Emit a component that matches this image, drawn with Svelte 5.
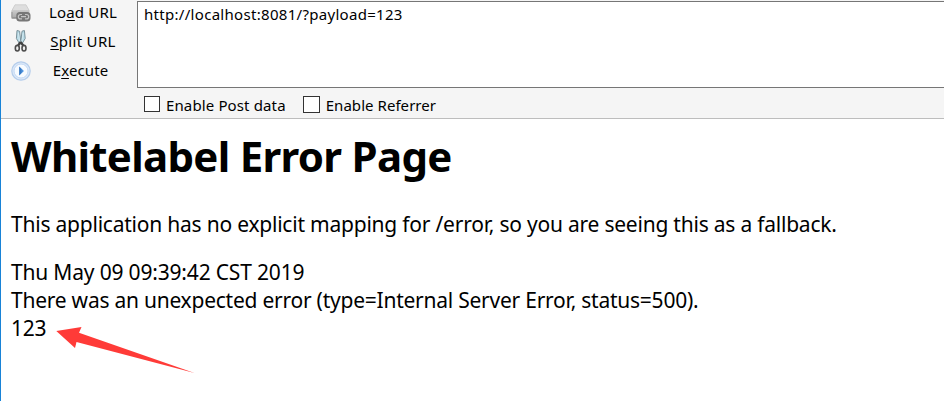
<script>
  const url = 'http://localhost:8081/?payload=123';
</script>

<div class="window">
  <header class="toolbar">
    <nav class="actions">
      <div class="action">
        <svg width="20" height="20" viewBox="0 0 20 20">
          <defs>
            <linearGradient id="drive" x1="0" y1="0" x2="0" y2="1">
              <stop offset="0" stop-color="#e3e3e3" />
              <stop offset="1" stop-color="#a5a5a5" />
            </linearGradient>
          </defs>
          <path d="M4 1.5H15L18.5 8V14.5Q18.5 16 17 16H1.5Q.3 16 .3 14.5V8Z" fill="url(#drive)" />
          <path d="M4 1.8H15L18.2 7.5H1Z" fill="#dedede" stroke="#c4c4c4" stroke-width=".6" />
          <path d="M1 9V14.5H17" fill="none" stroke="#959595" />
          <rect x="5.3" y="9" width="14.2" height="9.5" rx="3.5" fill="#777" />
          <path d="M11 11.5H9.5a2.2 2.2 0 0 0 0 4.4H11M14 11.5H15.5a2.2 2.2 0 0 1 0 4.4H14M10 13.7H15" fill="none" stroke="#c4c4c4" stroke-width="1.2" />
        </svg>
        <span class="load">Lo<u>a</u>d URL</span>
      </div>
      <div class="action scissors">
        <svg width="20" height="24" viewBox="0 0 20 24">
          <path d="M6 1.5L5.4 9.5L9 15.5L9.8 13L8.6 2.2ZM13.4 1.5L14.2 9.5L10.6 15.5L9.8 13L11 2.2Z" fill="#b8dbe7" stroke="#7b929b" />
          <path d="M7.4 4L8.7 13M12.2 4L10.8 13" stroke="#d3e9f0" />
          <path d="M9.6 13L6.8 17M9.6 13L12.6 17" stroke="#424242" stroke-width="2.2" />
          <ellipse cx="6.3" cy="19.2" rx="2" ry="2.8" fill="#eee" stroke="#4c4c4c" stroke-width="1.6" />
          <ellipse cx="13" cy="19.2" rx="2" ry="2.8" fill="#eee" stroke="#4c4c4c" stroke-width="1.6" />
        </svg>
        <span class="split"><u>S</u>plit URL</span>
      </div>
      <div class="action">
        <svg width="20" height="20" viewBox="0 0 20 20">
          <defs>
            <linearGradient id="play" x1="0" y1="0" x2="1" y2="0">
              <stop offset="0" stop-color="#2469b8" />
              <stop offset="1" stop-color="#67aaf0" />
            </linearGradient>
          </defs>
          <circle cx="10" cy="10" r="9.2" fill="#dce9f9" stroke="#b5cdeb" stroke-width="1.2" />
          <circle cx="10" cy="10" r="7" fill="#f7fbff" stroke="#c3d8f4" />
          <path d="M8.2 5.5L13 10L8.2 14.5Z" fill="url(#play)" />
        </svg>
        <span class="execute">E<u>x</u>ecute</span>
      </div>
    </nav>
    <div class="request">
      <div class="url"><span>{url}</span></div>
      <div class="options">
        <div class="option"><i></i><span class="post">Enable Post data</span></div>
        <div class="option"><i class="wide"></i><span class="referrer">Enable Referrer</span></div>
      </div>
    </div>
  </header>
  <main>
    <h1>Whitelabel Error Page</h1>
    <p class="intro">This application has no explicit mapping for /error, so you are seeing this as a fallback.</p>
    <div class="date">Thu May 09 09:39:42 CST 2019</div>
    <div class="cause">There was an unexpected error (type=Internal Server Error, status=500).</div>
    <div class="payload">123</div>
    <svg class="arrow" width="142" height="50" viewBox="0 0 142 50">
      <path d="M.3 6L25.5 2L23 7.7L138.5 47.9L20.5 17L19 23Z" fill="#ff3b38" />
    </svg>
  </main>
</div>

<style>
  :global(body) { overflow: hidden; background: #fff; }
  .window {
    box-sizing: border-box;
    width: 944px;
    height: 401px;
    border-left: 1px solid #1883d7;
    font-family: "Noto Sans", "Open Sans", sans-serif;
    color: #000;
    background: #fff;
    white-space: nowrap;
    overflow: hidden;
  }
  .toolbar {
    box-sizing: border-box;
    display: flex;
    height: 119px;
    background: #f5f5f5;
    border-bottom: 1px solid #bdbdbd;
    font-size: 15px;
  }
  .actions { width: 136px; flex: none; box-sizing: border-box; padding-left: 10px; }
  .action { height: 29px; display: flex; align-items: center; }
  .action svg { flex: none; margin-top: -3px; }
  .scissors svg { margin-top: -5px; }
  .action span { width: 82px; margin-left: 11px; margin-top: -5px; text-align: center; line-height: 20px; }
  .action .load { letter-spacing: .2px; }
  .action .split { letter-spacing: .3px; }
  .action .execute { margin-left: 8.5px; letter-spacing: .1px; }
  u { text-decoration-thickness: 1px; text-underline-offset: 2px; text-decoration-skip-ink: none; }
  .request { flex: 1; min-width: 0; }
  .url {
    box-sizing: border-box;
    height: 87px;
    margin-top: 1px;
    border: 1px solid #767676;
    border-right: 0;
    background: #fff;
    padding: 2px 6px;
    line-height: 20px;
    letter-spacing: .3px;
  }
  .options { display: flex; gap: 17px; padding: 7px 0 0 7px; }
  .option { display: flex; align-items: center; height: 20px; }
  .option i { box-sizing: border-box; width: 16px; height: 16px; margin: -2px 6px 0 0; border: 1px solid #333; background: #fff; }
  .option i.wide { width: 17px; height: 17px; margin-top: -1px; }
  .post { letter-spacing: .13px; }
  .referrer { letter-spacing: .05px; }
  main { position: relative; padding-left: 10px; font-size: 21px; line-height: 28px; }
  h1 { margin: 0; padding-top: 9px; font-size: 42px; line-height: 56px; font-weight: 700; letter-spacing: -.71px; }
  p { margin: 26px 0 20px; }
  .intro { letter-spacing: -.22px; }
  .date { letter-spacing: -.18px; }
  .cause { letter-spacing: -.24px; }
  .payload { letter-spacing: -.3px; }
  .arrow { position: absolute; left: 55px; top: 206px; }
</style>
